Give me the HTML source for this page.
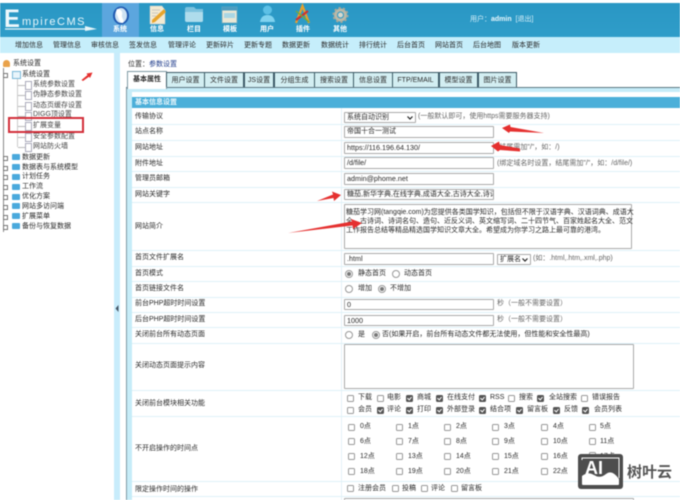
<!DOCTYPE html>
<html><head><meta charset="utf-8"><style>
html,body{margin:0;padding:0;background:#fff}
#p{position:relative;width:680px;height:500px;overflow:hidden;font:7px/10px "Liberation Sans","Noto Sans CJK SC",sans-serif;color:#2a2a2a;filter:blur(.4px);background:#fff}
#p div,#p span,#p b{position:absolute;white-space:nowrap}
.n{top:41px;color:#2a2a2a;font-size:7px}
.w{top:25px;color:#fff;font-weight:bold;width:36px;text-align:center}
.l{left:135px}
.h{left:132px;width:548px;height:1px;background:#dff1f8}
.i{left:344px;width:148px;background:#fff;border:1px solid #aaa;border-radius:1px;height:9px;line-height:9px;padding:0;text-indent:2px;color:#2a2a2a}
.g{color:#666}
.t{top:72px;height:14px;line-height:15px;background:#d3eef2;border:1px solid #3c5a66;border-bottom:0;text-align:center;box-sizing:content-box}
.c{width:5px;height:5px;border:1px solid #999;border-radius:1.500px;background:#fff}
.c.k{background:#555;border-color:#555}
.c.k:after{content:"";position:absolute;left:1px;top:0;width:2px;height:3px;border:solid #fff;border-width:0 1px 1px 0;transform:rotate(40deg)}
.r{width:6px;height:6px;border:1px solid #999;border-radius:50%;background:#fff}
.r.k:after{content:"";position:absolute;left:1px;top:1px;width:4px;height:4px;border-radius:50%;background:#777}
.d{left:22px;color:#2a2a2a}
.e{left:33px;color:#444}
.f{left:12px;width:8px;height:6px;background:#4aa9dc;border-radius:1px}
.pg{left:25px;width:5px;height:7px;background:#fff;border:1px solid #aab}
.pl{left:3px;width:3px;height:3px;border:1px solid #777;background:#fff}
.ln{left:18px;width:7px;height:1px;background:#bbb}
</style></head><body><div id="p">

<!-- header -->
<div style="left:0;top:3px;width:680px;height:34px;background:linear-gradient(#2a97c4,#2f9dc9)"></div>
<div style="left:102px;top:3px;width:37px;height:34px;background:#5ca6de"></div>
<div style="left:0;top:37px;width:680px;height:16px;background:#c6eefb"></div>

<!-- logo -->
<b style="left:4px;top:8px;font:bold 25px/22px 'Liberation Sans',sans-serif;color:#eef8fc;transform:scaleX(.95);transform-origin:0 0">E</b>
<div style="left:22px;top:16px;font:11px/12px 'Liberation Sans',sans-serif;letter-spacing:1.500px;color:#eaf7fb">mpireCMS</div>
<svg style="position:absolute;left:0;top:0" width="680" height="40">
<path d="M5 29H88" stroke="#e6f5fa" stroke-width="1.3"/><path d="M85 26L97 29L85 31Z" fill="#e6f5fa"/>
<!-- 系统 globe -->
<ellipse cx="121" cy="15.500" rx="8" ry="9" fill="#1e58b0"/><ellipse cx="121" cy="15.500" rx="6" ry="7.500" fill="#cfe2f2"/><path d="M117 9c4 0 6 3 5 6s3 5 1 8c-3 0-4-3-5-6s-3-5-1-8z" fill="#fff"/>
<!-- 信息 paper -->
<path d="M150 6H162L165 10V24H150Z" fill="#f3ead2" stroke="#ccc" stroke-width=".5"/><path d="M152 20L164 9L166 12L155 22L152 23Z" fill="#e8a52c"/><path d="M152 10H160M152 13H158M152 16H156" stroke="#bbb" stroke-width=".7"/>
<!-- 栏目 folder -->
<path d="M185 9Q185 7 187 7H194L196 9H203V21Q203 22 201 22H187Q185 22 185 20Z" fill="#7cc2de"/><path d="M185 12H203V20Q203 22 201 22H187Q185 22 185 20Z" fill="#aedcec"/>
<!-- 模板 window -->
<rect x="222" y="7" width="15" height="16" fill="#e9e7d5" stroke="#6da9bd" stroke-width=".8"/><rect x="222" y="7" width="15" height="3.500" fill="#4d9cc0"/><rect x="224" y="13" width="11" height="5" fill="#a9d6e4"/>
<!-- 用户 -->
<circle cx="267.500" cy="10" r="4.500" fill="#5cc0e6"/><path d="M260 22Q261 15 267.500 15T275 22Z" fill="#7fd2ef"/>
<!-- 插件 -->
<path d="M296 23L302.500 6L309 23" fill="none" stroke="#e8a02c" stroke-width="2.200"/><path d="M296 20L308 11" stroke="#c33" stroke-width="2.200"/><path d="M296 11L309 22" stroke="#7a3" stroke-width="1.300"/>
<!-- 其他 gear -->
<circle cx="340.500" cy="15" r="5" fill="none" stroke="#b9b9a9" stroke-width="3"/><circle cx="340.500" cy="15" r="7" fill="none" stroke="#a9a99a" stroke-width="2" stroke-dasharray="2.200 2.200"/><circle cx="340.500" cy="15" r="2.500" fill="#d8d8cc"/>
</svg>
<div class="w" style="left:102px">系统</div>
<div class="w" style="left:139px">信息</div>
<div class="w" style="left:176px">栏目</div>
<div class="w" style="left:212px">模板</div>
<div class="w" style="left:249px">用户</div>
<div class="w" style="left:285px">插件</div>
<div class="w" style="left:322px">其他</div>
<div style="left:470px;top:15px;color:#d5eef8">用户：<b style="position:static;color:#e9f7fc">admin</b> &nbsp;[退出]</div>

<div class="n" style="left:15px">增加信息</div><div class="n" style="left:53px">管理信息</div><div class="n" style="left:91px">审核信息</div><div class="n" style="left:129px">签发信息</div><div class="n" style="left:168px">管理评论</div><div class="n" style="left:206px">更新碎片</div><div class="n" style="left:244px">更新专题</div><div class="n" style="left:282px">数据更新</div><div class="n" style="left:321px">数据统计</div><div class="n" style="left:359px">排行统计</div><div class="n" style="left:397px">后台首页</div><div class="n" style="left:435px">网站首页</div><div class="n" style="left:473px">后台地图</div><div class="n" style="left:512px">版本更新</div>

<!-- splitter -->
<div style="left:114px;top:53px;width:6px;height:447px;background:#c8ecfb"></div>
<svg style="position:absolute;left:115px;top:305px" width="5" height="7"><path d="M3.500 0L.5 3.500L3.500 7Z" fill="#456"/></svg>

<!-- sidebar -->
<div style="left:3px;top:60px;width:7px;height:7px;background:#e9a24a;border-radius:50% 50% 1px 1px"></div>
<div style="left:13px;top:59px">系统设置</div>
<div style="left:3px;top:68px;width:1px;height:164px;background:#888"></div>
<div class="pl" style="top:73px"></div>
<div style="left:12px;top:71px;width:7px;height:6px;border:1px solid #7ab8d8;background:#e9f5fb"></div>
<div class="d" style="top:70px">系统设置</div>
<div style="left:17px;top:79px;width:1px;height:68px;background:#ccc"></div>
<div class="ln" style="top:85px"></div><div class="pg" style="top:81px"></div><div class="e" style="top:80px">系统参数设置</div>
<div class="ln" style="top:95px"></div><div class="pg" style="top:91px"></div><div class="e" style="top:90px">伪静态参数设置</div>
<div class="ln" style="top:106px"></div><div class="pg" style="top:102px"></div><div class="e" style="top:101px">动态页缓存设置</div>
<div class="ln" style="top:116px"></div><div class="pg" style="top:112px"></div><div class="e" style="top:110px">DIGG顶设置</div>
<div class="ln" style="top:126px"></div><div class="pg" style="top:122px"></div><div class="e" style="top:121px">扩展变量</div>
<div class="ln" style="top:137px"></div><div class="pg" style="top:133px"></div><div class="e" style="top:132px">安全参数配置</div>
<div class="ln" style="top:147px"></div><div class="pg" style="top:143px"></div><div class="e" style="top:142px">网站防火墙</div>
<div style="left:8px;top:117px;width:72px;height:12px;border:2px solid #d22f3a"></div>

<div class="pl" style="top:156px"></div><div class="f" style="top:154px"></div><div class="d" style="top:153px">数据更新</div>
<div class="pl" style="top:166px"></div><div class="f" style="top:164px"></div><div class="d" style="top:163px">数据表与系统模型</div>
<div class="pl" style="top:175px"></div><div class="f" style="top:174px"></div><div class="d" style="top:172px">计划任务</div>
<div class="pl" style="top:185px"></div><div class="f" style="top:184px"></div><div class="d" style="top:182px">工作流</div>
<div class="pl" style="top:195px"></div><div class="f" style="top:194px"></div><div class="d" style="top:192px">优化方案</div>
<div class="pl" style="top:205px"></div><div class="f" style="top:203px"></div><div class="d" style="top:202px">网站多访问端</div>
<div class="pl" style="top:215px"></div><div class="f" style="top:213px"></div><div class="d" style="top:212px">扩展菜单</div>
<div class="pl" style="top:225px"></div><div class="f" style="top:223px"></div><div class="d" style="top:222px">备份与恢复数据</div>

<!-- main -->
<div style="left:128px;top:60px">位置：<span style="position:static;color:#24408e">参数设置</span></div>

<div style="left:126px;top:87px;width:554px;height:413px;background:#c6ecf8;border-left:1px solid #7f9aa5"></div>
<div style="left:126px;top:87px;width:554px;height:1px;background:#5d7782"></div>
<div style="left:132px;top:92px;width:548px;height:408px;background:#fff"></div>
<div style="left:132px;top:97px;width:548px;height:11px;background:#4bafd9"></div>
<div style="left:135px;top:97px;line-height:11px;color:#e8f6fb;font-weight:bold">基本信息设置</div>
<div style="left:341px;top:108px;width:1px;height:392px;background:#e3f2f8"></div>

<div class="t" style="left:127px;width:38px;top:71px;height:17px;background:#fff;border-color:#7f9aa5;font-weight:bold">基本属性</div>
<div class="t" style="left:166px;width:37px">用户设置</div>
<div class="t" style="left:204px;width:38px">文件设置</div>
<div class="t" style="left:244px;width:28px">JS设置</div>
<div class="t" style="left:274px;width:39px">分组生成</div>
<div class="t" style="left:314px;width:38px">搜索设置</div>
<div class="t" style="left:353px;width:38px">信息设置</div>
<div class="t" style="left:392px;width:45px">FTP/EMAIL</div>
<div class="t" style="left:439px;width:37px">模型设置</div>
<div class="t" style="left:478px;width:37px">图片设置</div>

<!-- row lines -->
<div class="h" style="top:124px"></div><div class="h" style="top:140px"></div><div class="h" style="top:156px"></div><div class="h" style="top:171px"></div><div class="h" style="top:187px"></div><div class="h" style="top:202px"></div><div class="h" style="top:250px"></div><div class="h" style="top:266px"></div><div class="h" style="top:281px"></div><div class="h" style="top:297px"></div><div class="h" style="top:312px"></div><div class="h" style="top:327px"></div><div class="h" style="top:343px"></div><div class="h" style="top:390px"></div><div class="h" style="top:416px"></div><div class="h" style="top:481px"></div><div class="h" style="top:496px"></div>

<!-- labels -->
<div class="l" style="top:112px">传输协议</div>
<div class="l" style="top:127px">站点名称</div>
<div class="l" style="top:143px">网站地址</div>
<div class="l" style="top:159px">附件地址</div>
<div class="l" style="top:174px">管理员邮箱</div>
<div class="l" style="top:190px">网站关键字</div>
<div class="l" style="top:222px">网站简介</div>
<div class="l" style="top:253px">首页文件扩展名</div>
<div class="l" style="top:269px">首页模式</div>
<div class="l" style="top:284px">首页链接文件名</div>
<div class="l" style="top:299px">前台PHP超时时间设置</div>
<div class="l" style="top:315px">后台PHP超时时间设置</div>
<div class="l" style="top:330px">关闭前台所有动态页面</div>
<div class="l" style="top:361px">关闭动态页面提示内容</div>
<div class="l" style="top:399px">关闭前台模块相关功能</div>
<div class="l" style="top:444px">不开启操作的时间点</div>
<div class="l" style="top:485px">限定操作时间的操作</div>

<!-- inputs -->
<div class="i" style="top:112px;width:70px">系统自动识别<svg style="position:absolute;right:2px;top:3px" width="6" height="4"><path d="M.5 .5L3 3L5.500 .5" fill="none" stroke="#222" stroke-width="1.2"/></svg></div>
<div class="g" style="left:418px;top:112px">(一般默认即可，使用https需要服务器支持)</div>
<div class="i" style="top:126px;height:10px;line-height:10px">帝国十合一测试</div>
<div class="i" style="top:142px;height:10px;line-height:10px;font-size:7.200px">https://116.196.64.130/</div>
<div class="g" style="left:497px;top:143px">(结尾需加"/"，如：/)</div>
<div class="i" style="top:157px;height:10px;line-height:10px;font-size:7.200px">/d/file/</div>
<div class="g" style="left:497px;top:159px">(绑定域名时设置，结尾需加"/"，如：/d/file/)</div>
<div class="i" style="top:173px;height:10px;line-height:10px;font-size:7.200px">admin@phome.net</div>
<div class="i" style="top:189px;height:9px;overflow:hidden">糖茄,新华字典,在线字典,成语大全,古诗大全,诗词</div>
<div class="i" style="top:204px;width:288px;line-height:9px;padding:2.500px 0 0 1px;box-sizing:border-box;height:45px;text-indent:0">糖茄学习网(tangqie.com)为您提供各类国学知识，包括但不限于汉语字典、汉语词典、成语大<br>全、古诗词、诗词名句、造句、近反义词、英文缩写词、二十四节气、百家姓起名大全、范文<br>工作报告总结等精品精选国学知识文章大全。希望成为你学习之路上最可靠的港湾。</div>
<div class="i" style="top:253px;height:10px;line-height:10px;font-size:7.200px">.html</div>
<div class="i" style="left:497px;top:254px;width:32px;height:9px">扩展名<svg style="position:absolute;right:2px;top:3px" width="6" height="4"><path d="M.5 .5L3 3L5.500 .5" fill="none" stroke="#222" stroke-width="1.2"/></svg></div>
<div class="g" style="left:533px;top:254px">(如：.html,.htm,.xml,.php)</div>

<div class="r k" style="left:345px;top:270px"></div><div style="left:358px;top:269px">静态首页</div>
<div class="r" style="left:392px;top:270px"></div><div style="left:404px;top:269px">动态首页</div>
<div class="r" style="left:345px;top:285px"></div><div style="left:358px;top:284px">增加</div>
<div class="r k" style="left:378px;top:285px"></div><div style="left:390px;top:284px">不增加</div>
<div class="i" style="top:299px;height:9px;font-size:7.200px">0</div><div class="g" style="left:497px;top:299px">秒（一般不需要设置）</div>
<div class="i" style="top:315px;height:9px;font-size:7.200px">1000</div><div class="g" style="left:497px;top:315px">秒（一般不需要设置）</div>
<div class="r" style="left:345px;top:331px"></div><div style="left:358px;top:330px">是</div>
<div class="r k" style="left:372px;top:331px"></div><div style="left:382px;top:330px">否(如果开启，前台所有动态文件都无法使用，但性能和安全性最高)</div>
<div class="i" style="top:344px;width:288px;height:43px"></div>

<!-- checks row 1 -->
<div class="c" style="left:347px;top:395px"></div><div style="left:358px;top:393px">下载</div>
<div class="c" style="left:377px;top:395px"></div><div style="left:387px;top:393px">电影</div>
<div class="c k" style="left:406px;top:395px"></div><div style="left:417px;top:393px">商城</div>
<div class="c k" style="left:436px;top:395px"></div><div style="left:447px;top:393px">在线支付</div>
<div class="c k" style="left:479px;top:395px"></div><div style="left:490px;top:393px">RSS</div>
<div class="c" style="left:508px;top:395px"></div><div style="left:519px;top:393px">搜索</div>
<div class="c k" style="left:537px;top:395px"></div><div style="left:549px;top:393px">全站搜索</div>
<div class="c" style="left:581px;top:395px"></div><div style="left:592px;top:393px">错误报告</div>
<!-- row 2 -->
<div class="c" style="left:347px;top:407px"></div><div style="left:358px;top:405px">会员</div>
<div class="c k" style="left:377px;top:407px"></div><div style="left:387px;top:405px">评论</div>
<div class="c k" style="left:406px;top:407px"></div><div style="left:417px;top:405px">打印</div>
<div class="c k" style="left:436px;top:407px"></div><div style="left:447px;top:405px">外部登录</div>
<div class="c k" style="left:479px;top:407px"></div><div style="left:490px;top:405px">结合项</div>
<div class="c k" style="left:516px;top:407px"></div><div style="left:527px;top:405px">留言板</div>
<div class="c k" style="left:553px;top:407px"></div><div style="left:564px;top:405px">反馈</div>
<div class="c k" style="left:582px;top:407px"></div><div style="left:594px;top:405px">会员列表</div>

<!-- hours -->
<div class="c" style="left:348px;top:424px"></div><div style="left:360px;top:422px">0点</div>
<div class="c" style="left:396px;top:424px"></div><div style="left:408px;top:422px">1点</div>
<div class="c" style="left:444px;top:424px"></div><div style="left:456px;top:422px">2点</div>
<div class="c" style="left:492px;top:424px"></div><div style="left:504px;top:422px">3点</div>
<div class="c" style="left:541px;top:424px"></div><div style="left:553px;top:422px">4点</div>
<div class="c" style="left:589px;top:424px"></div><div style="left:600px;top:422px">5点</div>
<div class="c" style="left:348px;top:438px"></div><div style="left:360px;top:437px">6点</div>
<div class="c" style="left:396px;top:438px"></div><div style="left:408px;top:437px">7点</div>
<div class="c" style="left:444px;top:438px"></div><div style="left:456px;top:437px">8点</div>
<div class="c" style="left:492px;top:438px"></div><div style="left:504px;top:437px">9点</div>
<div class="c" style="left:541px;top:438px"></div><div style="left:553px;top:437px">10点</div>
<div class="c" style="left:589px;top:438px"></div><div style="left:600px;top:437px">11点</div>
<div class="c" style="left:348px;top:453px"></div><div style="left:360px;top:452px">12点</div>
<div class="c" style="left:396px;top:453px"></div><div style="left:408px;top:452px">13点</div>
<div class="c" style="left:444px;top:453px"></div><div style="left:456px;top:452px">14点</div>
<div class="c" style="left:492px;top:453px"></div><div style="left:504px;top:452px">15点</div>
<div class="c" style="left:541px;top:453px"></div><div style="left:553px;top:452px">16点</div>
<div class="c" style="left:589px;top:452px"></div><div style="left:600px;top:452px">17点</div>
<div class="c" style="left:348px;top:468px"></div><div style="left:360px;top:467px">18点</div>
<div class="c" style="left:396px;top:468px"></div><div style="left:408px;top:467px">19点</div>
<div class="c" style="left:444px;top:468px"></div><div style="left:456px;top:467px">20点</div>
<div class="c" style="left:492px;top:468px"></div><div style="left:504px;top:467px">21点</div>
<div class="c" style="left:541px;top:468px"></div><div style="left:553px;top:467px">22点</div>

<div class="c" style="left:347px;top:485px"></div><div style="left:358px;top:484px">注册会员</div>
<div class="c" style="left:392px;top:485px"></div><div style="left:402px;top:484px">投稿</div>
<div class="c" style="left:421px;top:485px"></div><div style="left:431px;top:484px">评论</div>
<div class="c" style="left:451px;top:485px"></div><div style="left:461px;top:484px">留言板</div>
<div class="i" style="top:498px;width:288px;height:20px"></div>

<!-- red arrows -->
<svg style="position:absolute;left:0;top:0" width="680" height="500">
<g fill="#e5302f">
<path d="M81.500 80L87.500 75L86.500 73.500L92.500 72.500L90 78L89 76.800L83 81Z"/>
<path d="M502 128L510 124.500L510.500 127L544 133L510 131.500L509 133Z"/>
<path d="M491 146L499 141.500L500 145L520 148.500L520 151.500L500 150L498 151.500Z"/>
<path d="M317 201L333 194.500L332 191.500L341 195L334 201L333.500 198Z"/>
<path d="M288 233L352 221.500L351 219L362 223L353 229L352.500 225.500Z"/>
</g>
</svg>

<!-- watermark -->
<div style="left:578px;top:454px;width:45px;height:35px;background:#4d4d4d;border-radius:3px"></div>
<svg style="position:absolute;left:578px;top:454px" width="45" height="35"><path d="M4 30V22Q10 17 16 21T28 20T41 25V30Q41 31 40 31H5Q4 31 4 30Z" fill="#fff"/><path d="M4 6V4H41V24" fill="none" stroke="#fff" stroke-width="1"/></svg>
<b style="left:585px;top:459px;font:bold 18px/18px 'Liberation Sans',sans-serif;color:#fff">AI</b>
<b style="left:627px;top:463px;font:bold 15px/17px 'Noto Sans CJK SC',sans-serif;color:#555">树叶云</b>
</div></body></html>
